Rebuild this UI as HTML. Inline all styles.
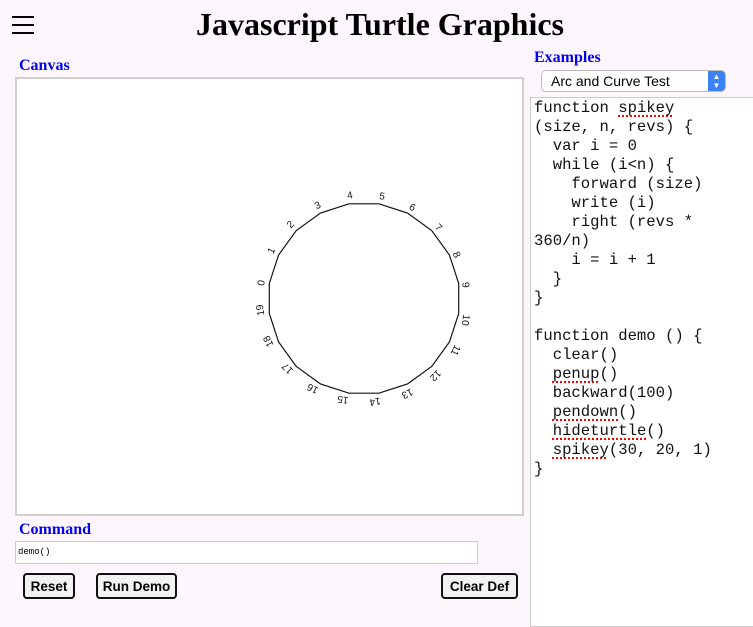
<!DOCTYPE html>
<html><head><meta charset="utf-8"><style>
body{margin:0;width:753px;height:621px;background:#fdf7fd;position:relative;overflow:hidden;font-family:"Liberation Serif",serif}
.abs{position:absolute}
h1{position:absolute;left:0;top:4px;width:760px;margin:0;text-align:center;font-size:32px;font-weight:bold;line-height:40px}
.lbl{position:absolute;color:#0000ee;font-weight:bold;font-size:16px}
.ham{position:absolute;left:12px;width:22px;height:2px;background:#000}
#canvas{left:15px;top:77px;width:505px;height:435px;background:#fff;border:2px solid #d0d0d0}
#code{left:530px;top:97px;width:230px;height:530px;background:#fff;border:1px solid #ccc;box-sizing:border-box}
pre{margin:0;position:absolute;left:3px;top:1px;font-family:"Liberation Mono",monospace;font-size:15.6px;line-height:19px;color:#111}
.u{text-decoration:underline dotted red;text-decoration-thickness:2px;text-underline-offset:3px}
.btn{position:absolute;top:573px;height:26px;border:2px solid #111;border-radius:4px;background:#f2f2f2;font-family:"Liberation Sans",sans-serif;font-weight:bold;font-size:13.5px;line-height:23px;text-align:center;box-sizing:border-box}
</style></head><body>
<div class="ham" style="top:16px"></div><div class="ham" style="top:24px"></div><div class="ham" style="top:32px"></div>
<h1>Javascript Turtle Graphics</h1>
<div class="lbl" style="left:19px;top:57px">Canvas</div>
<div class="lbl" style="left:534px;top:49px">Examples</div>
<div class="abs" style="left:541px;top:70px;width:185px;height:22px;background:#fff;border:1px solid #bbb;border-radius:5px;box-sizing:border-box;font-family:'Liberation Sans',sans-serif;font-size:14px;line-height:20px;padding-left:9px">Arc and Curve Test
<div class="abs" style="right:0;top:0;width:17px;height:20px;background:#3b82f6;border-radius:0 4px 4px 0;color:#fff;font-size:8px;line-height:9px;text-align:center;padding-top:1px;box-sizing:border-box">▲<br>▼</div></div>
<div id="canvas" class="abs"></div>
<svg class="abs" style="left:0;top:0" width="753" height="621">
<polygon fill="none" stroke="#111" stroke-width="1.2" points="269.3,283.5 278.6,255 296.2,230.7 320.5,213 349,203.8 379,203.8 407.5,213 431.8,230.7 449.4,255 458.7,283.5 458.7,313.5 449.4,342 431.8,366.3 407.5,384 379,393.2 349,393.2 320.5,384 296.2,366.3 278.6,342 269.3,313.5"/>
<g font-family="Liberation Sans,sans-serif" font-size="10" text-anchor="middle" dominant-baseline="central" fill="#111">
<text transform="translate(262,283) rotate(-81)">0</text>
<text transform="translate(272,251) rotate(-63)">1</text>
<text transform="translate(291,225) rotate(-45)">2</text>
<text transform="translate(318,206) rotate(-27)">3</text>
<text transform="translate(350,196) rotate(-9)">4</text>
<text transform="translate(382,197) rotate(9)">5</text>
<text transform="translate(412,208) rotate(27)">6</text>
<text transform="translate(438,228) rotate(45)">7</text>
<text transform="translate(456,255) rotate(63)">8</text>
<text transform="translate(465,285) rotate(81)">9</text>
<text transform="translate(465,320) rotate(99)">10</text>
<text transform="translate(455,350) rotate(117)">11</text>
<text transform="translate(435,375) rotate(135)">12</text>
<text transform="translate(407,393) rotate(153)">13</text>
<text transform="translate(375,401) rotate(171)">14</text>
<text transform="translate(343,399) rotate(189)">15</text>
<text transform="translate(313,388) rotate(207)">16</text>
<text transform="translate(288,368) rotate(225)">17</text>
<text transform="translate(269,341) rotate(243)">18</text>
<text transform="translate(261,310) rotate(261)">19</text>
</g></svg>
<div class="lbl" style="left:19px;top:521px">Command</div>
<div class="abs" style="left:15px;top:541px;width:463px;height:23px;background:#fff;border:1px solid #ccc;box-sizing:border-box;font-family:'Liberation Mono',monospace;font-size:9px;line-height:21px;padding-left:2px">demo()</div>
<div class="btn" style="left:23px;width:52px">Reset</div>
<div class="btn" style="left:96px;width:81px">Run Demo</div>
<div class="btn" style="left:441px;width:77px">Clear Def</div>
<div id="code" class="abs"><pre>function <span class="u">spikey</span>
(size, n, revs) {
  var i = 0
  while (i&lt;n) {
    forward (size)
    write (i)
    right (revs *
360/n)
    i = i + 1
  }
}

function demo () {
  clear()
  <span class="u">penup</span>()
  backward(100)
  <span class="u">pendown</span>()
  <span class="u">hideturtle</span>()
  <span class="u">spikey</span>(30, 20, 1)
}</pre></div>
</body></html>
